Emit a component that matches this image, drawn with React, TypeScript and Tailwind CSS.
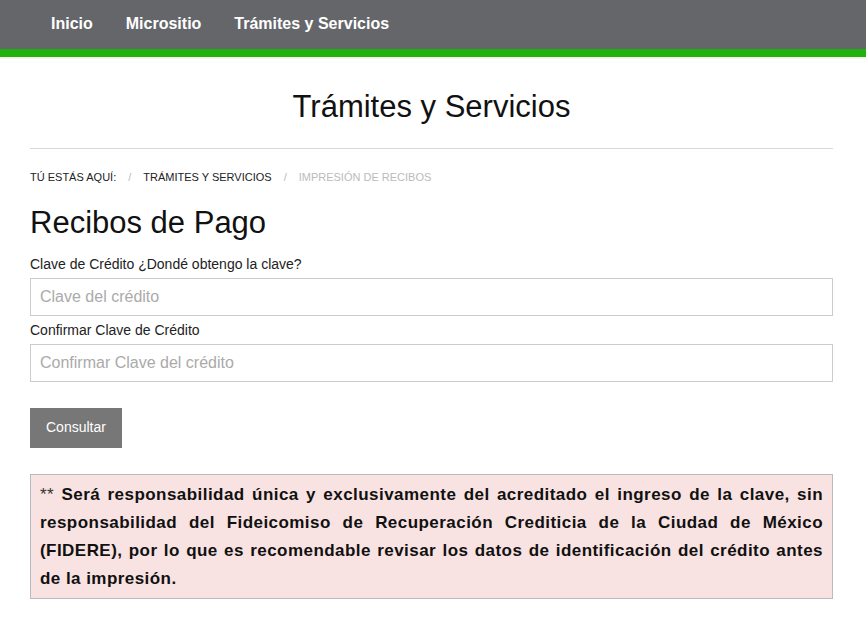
export default function App() {
  const links = ['Inicio', 'Micrositio', 'Trámites y Servicios']

  return (
    <div className="min-h-[617px] bg-white" style={{ fontFamily: '"Liberation Sans", Arial, sans-serif' }}>
      <header>
        <nav className="h-[49px] bg-[#65666a] flex items-center pl-[51px] gap-[33px]">
          {links.map((l) => (
            <a key={l} href="#" className="text-white font-bold text-[16px] leading-none mt-[-2px]">
              {l}
            </a>
          ))}
        </nav>
        <div className="h-[8px] bg-[#1fb10f]" />
        <div className="h-[2px] bg-[#f7f2f0]" />
      </header>

      <main className="pl-[30px] pr-[33px] pt-[32px]">
        <h1 className="text-center text-[31px] leading-none text-[#111] pb-[26px] border-b border-[#d8d8d8]">
          Trámites y Servicios
        </h1>

        <div className="flex items-center gap-[12px] text-[11px] uppercase mt-[20px] text-[#222]">
          <span>Tú estás aquí:</span>
          <span className="text-[#bbb]">/</span>
          <span>Trámites y Servicios</span>
          <span className="text-[#bbb]">/</span>
          <span className="text-[#bbb]">Impresión de recibos</span>
        </div>

        <h2 className="text-[31px] leading-none text-[#111] mt-[21px]">Recibos de Pago</h2>

        <label className="block text-[14px] text-[#222] mt-[19px] leading-none">
          Clave de Crédito <a href="#">¿Dondé obtengo la clave?</a>
        </label>
        <input
          placeholder="Clave del crédito"
          className="block w-full h-[38px] border border-[#ccc] mt-[7px] px-[9px] text-[16px] placeholder:text-[#aaa] outline-none"
        />

        <label className="block text-[14px] text-[#222] mt-[7px] leading-none">Confirmar Clave de Crédito</label>
        <input
          placeholder="Confirmar Clave del crédito"
          className="block w-full h-[38px] border border-[#ccc] mt-[7px] px-[9px] text-[16px] placeholder:text-[#aaa] outline-none"
        />

        <button className="mt-[26px] h-[40px] px-[16px] bg-[#777] text-white text-[14px]">Consultar</button>

        <div className="mt-[26px] border border-[#bbb] bg-[#f8e3e2] px-[9px] pt-[6px] pb-[5px]">
          <p className="text-[17px] leading-[28px] font-bold tracking-[0.45px] text-[#111] text-justify">
            <span className="font-normal text-[#333]">** </span>Será responsabilidad única y exclusivamente del acreditado el
            ingreso de la clave, sin responsabilidad del Fideicomiso de Recuperación Crediticia de la Ciudad de México
            (FIDERE), por lo que es recomendable revisar los datos de identificación del crédito antes de la impresión.
          </p>
        </div>
      </main>
    </div>
  )
}
